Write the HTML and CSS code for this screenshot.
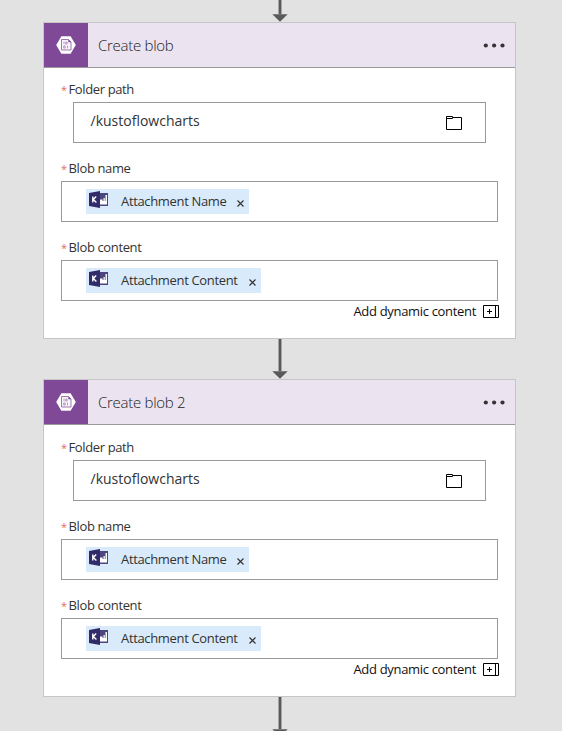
FILE: index.html
```html
<!DOCTYPE html>
<html lang="en">
<head>
<meta charset="utf-8">
<title>Flow designer</title>
<link rel="stylesheet" href="styles.css">
</head>
<body>
<svg class="symbols" width="0" height="0">
  <defs>
    <symbol id="blob" viewBox="0 0 20 18">
      <path d="M5.400 0.200h9.200L19.800 9l-5.200 8.800H5.400L0.200 9z" fill="#fff"/>
      <path d="M5.500 3.500h7l2.500 2.500V14H5.500z" fill="#f9f4fa" stroke="#a078b0"/>
      <path d="M12.300 3.200v3h3z" fill="#804998"/>
      <path d="M8 5.700v2.500M9.700 6h1.400v2H9.700zM7.700 9.900h1.500v2.200H7.700zM11.500 9.600v2.700" fill="none" stroke="#a985b9" stroke-width=".8"/>
    </symbol>
    <symbol id="kusto" viewBox="0 0 20 17">
      <path d="M0 2L11 0v17L0 15z" fill="#312b69"/>
      <path d="M11 2h8v13h-8z" fill="#4b467d"/>
      <path d="M11 8.500h2.600v1.500h.9v-3h1.300v3h.7V4h1.500v9.500h-7z" fill="#fff"/>
      <path d="M3.800 5.500v6M7.200 5.500L4.300 8.500l3.100 3" fill="none" stroke="#fff" stroke-width="1.400"/>
    </symbol>
    <symbol id="folder" viewBox="0 0 16 14">
      <path d="M.5 13.500V.5h6v1h9v12zM.5 2.500h6v-1" fill="none" stroke="#000"/>
    </symbol>
    <symbol id="add" viewBox="0 0 16 13">
      <path d="M.5.5h15v12H.5zM12.500.5v12M4 6.500h5M6.500 4v5" fill="none" stroke="#000"/>
    </symbol>
    <symbol id="dots" viewBox="0 0 22 6">
      <g fill="#333"><circle cx="2.800" cy="3.500" r="2.100"/><circle cx="11.100" cy="3.500" r="2.100"/><circle cx="19.500" cy="3.500" r="2.100"/></g>
    </symbol>
    <symbol id="close" viewBox="0 0 7 7">
      <path d="M.5.5l6 6M6.500.5l-6 6" stroke="#333" stroke-width="1.150" fill="none"/>
    </symbol>
    <symbol id="head" viewBox="0 0 16 8">
      <path d="M.3.200h15.400L8 7.800z" fill="#595959"/>
    </symbol>
  </defs>
</svg>
<main class="flow">
  <div class="arrow arrow-in"><i class="stem"></i><svg class="head"><use href="#head"/></svg></div>
  <section class="card">
    <header class="card-header">
      <div class="tile"><svg class="blob"><use href="#blob"/></svg></div>
      <h2 class="title">Create blob</h2>
      <svg class="dots"><use href="#dots"/></svg>
    </header>
    <div class="body">
      <div class="label"><b class="star">*</b><span>Folder path</span></div>
      <div class="box path"><span>/kustoflowcharts</span><svg class="folder"><use href="#folder"/></svg></div>
      <div class="label"><b class="star">*</b><span>Blob name</span></div>
      <div class="box"><div class="chip chip-name"><svg class="kusto"><use href="#kusto"/></svg><span>Attachment Name</span><svg class="close"><use href="#close"/></svg></div></div>
      <div class="label"><b class="star">*</b><span>Blob content</span></div>
      <div class="box"><div class="chip chip-content"><svg class="kusto"><use href="#kusto"/></svg><span>Attachment Content</span><svg class="close"><use href="#close"/></svg></div></div>
      <div class="dynamic"><span>Add dynamic content</span><svg class="add"><use href="#add"/></svg></div>
    </div>
  </section>
  <div class="arrow"><i class="stem"></i><svg class="head"><use href="#head"/></svg></div>
  <section class="card card-second">
    <header class="card-header">
      <div class="tile"><svg class="blob"><use href="#blob"/></svg></div>
      <h2 class="title">Create blob 2</h2>
      <svg class="dots"><use href="#dots"/></svg>
    </header>
    <div class="body">
      <div class="label"><b class="star">*</b><span>Folder path</span></div>
      <div class="box path"><span>/kustoflowcharts</span><svg class="folder"><use href="#folder"/></svg></div>
      <div class="label"><b class="star">*</b><span>Blob name</span></div>
      <div class="box"><div class="chip chip-name"><svg class="kusto"><use href="#kusto"/></svg><span>Attachment Name</span><svg class="close"><use href="#close"/></svg></div></div>
      <div class="label"><b class="star">*</b><span>Blob content</span></div>
      <div class="box"><div class="chip chip-content"><svg class="kusto"><use href="#kusto"/></svg><span>Attachment Content</span><svg class="close"><use href="#close"/></svg></div></div>
      <div class="dynamic"><span>Add dynamic content</span><svg class="add"><use href="#add"/></svg></div>
    </div>
  </section>
  <div class="arrow"><i class="stem"></i><svg class="head"><use href="#head"/></svg></div>
</main>
</body>
</html>
```
FILE: styles.css
```css
* { box-sizing: border-box; }
body {
  margin: 0;
  height: 731px;
  overflow: hidden;
  background: #e2e2e2;
  font: 13px/18px "Open Sans", "Noto Sans", sans-serif;
  color: #333;
}
svg { display: block; flex: none; }
.symbols { position: absolute; }
.flow { width: 473px; margin-left: 43px; }
.arrow {
  height: 40px;
  width: 16px;
  margin-left: 229px;
  display: flex;
  flex-direction: column;
  align-items: center;
}
.arrow-in { height: 22px; }
.stem { width: 4px; flex: 1; background: #595959; border: solid #a5a5a5; border-width: 0 1px; }
.head { width: 16px; height: 8px; }
.card { height: 317px; background: #fff; border: 1px solid #c6c6c6; }
.card-second { height: 318px; }
.card-header {
  height: 45px;
  display: flex;
  align-items: center;
  background: #ece3f0;
  border-bottom: 1px solid #999;
  padding-right: 10px;
}
.tile { width: 44px; height: 44px; background: #804998; display: flex; align-items: center; justify-content: center; }
.blob { width: 20px; height: 18px; }
.title { flex: 1; margin: 0 0 0 10px; font-size: 15px; font-weight: 300; letter-spacing: -.28px; color: #222; }
.dots { width: 22px; height: 6px; }
.body { padding: 12px 17px 0; }
.card-second .body { padding-top: 13px; }
.label { height: 22px; display: flex; line-height: 19px; letter-spacing: -.37px; }
.star { width: 7.5px; color: #e46a5e; font-weight: 400; font-size: 11px; }
.box { width: 437px; height: 41px; border: 1px solid #999; margin-bottom: 16px; padding: 7px 0 0 24px; }
.path {
  width: 413px;
  margin-left: 12px;
  padding: 0 23px 0 16.5px;
  display: flex;
  justify-content: space-between;
  font-size: 14px;
}
.path span { line-height: 36px; }
.folder { width: 16px; height: 14px; margin-top: 13px; }
.chip { height: 25px; background: #d9ebfa; display: flex; padding: 0 5px 0 3px; }
.chip-name { width: 163px; }
.chip-content { width: 175px; }
.chip span { margin-left: 12px; line-height: 25px; flex: 1; white-space: nowrap; letter-spacing: -.34px; }
.kusto { width: 20px; height: 17px; margin-top: 2px; }
.close { width: 7px; height: 7px; margin-top: 11px; }
.dynamic { display: flex; justify-content: flex-end; margin: -15px -1px 0 0; color: #111; letter-spacing: -.32px; }
.add { width: 16px; height: 13px; margin: 3px 0 0 7px; }
```
